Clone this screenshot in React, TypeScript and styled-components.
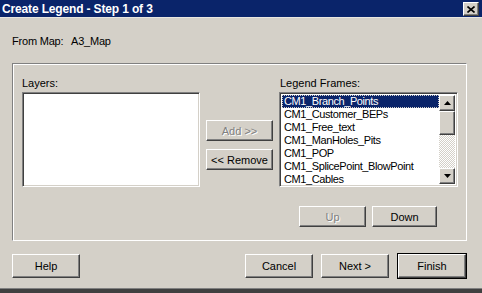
import React from "react";
import styled, { createGlobalStyle, css } from "styled-components";

const Global = createGlobalStyle`
  html, body { margin: 0; padding: 0; background: #d4d0c8; }
  body { font-family: "Liberation Sans", Arial, sans-serif; font-size: 11px; color: #000; }
  * { box-sizing: border-box; }
`;

const Window = styled.div`
  width: 482px;
  height: 293px;
  background: #d4d0c8;
  display: flex;
  flex-direction: column;
  overflow: hidden;
`;

const TitleBar = styled.div`
  height: 17px;
  flex: none;
  background: #0a246a;
  display: flex;
  align-items: center;
  justify-content: space-between;
  padding: 0 3px 0 2px;
`;

const Title = styled.span`
  color: #fff;
  font-weight: bold;
  font-size: 12px;
  letter-spacing: -0.15px;
`;

const CloseBtn = styled.div`
  width: 16px;
  height: 14px;
  margin-top: 2px;
  align-self: flex-start;
  background: #d4d0c8;
  border-top: 1px solid #fff;
  border-left: 1px solid #fff;
  border-right: 1px solid #404040;
  border-bottom: 1px solid #404040;
  box-shadow: inset -1px -1px 0 #808080;
  display: flex;
  align-items: center;
  justify-content: center;
`;

const Body = styled.div`
  flex: 1;
  display: flex;
  flex-direction: column;
  border-top: 1px solid #e8e6e0;
`;

const FromRow = styled.div`
  display: flex;
  height: 13px;
  line-height: 13px;
  font-size: 11px;
  letter-spacing: -0.2px;
  margin: 17px 0 15px 12px;
`;

const FromLabel = styled.div`
  flex: none;
  width: 59px;
`;

const Group = styled.div`
  margin-left: 12px;
  width: 455px;
  height: 178px;
  border: 1px solid #808080;
  border-right-color: #fff;
  border-bottom-color: #fff;
  box-shadow: inset 1px 1px 0 #fff, 1px 1px 0 #808080 inset;
  display: grid;
  grid-template-columns: 178px 67px 179px;
  column-gap: 6px;
  padding: 13px 0 0 9px;
  align-content: start;
`;

const Column = styled.div`
  display: flex;
  flex-direction: column;
`;

const Label = styled.div<{ $indent?: number }>`
  height: 13px;
  line-height: 13px;
  margin-bottom: 2px;
  padding-left: ${(p) => p.$indent ?? 0}px;
`;

const sunken = css`
  background: #fff;
  border-top: 1px solid #808080;
  border-left: 1px solid #808080;
  border-right: 1px solid #fff;
  border-bottom: 1px solid #fff;
  box-shadow: inset 1px 1px 0 #404040, inset -1px -1px 0 #d4d0c8;
`;

const ListBox = styled.div`
  ${sunken};
  height: 95px;
  width: 100%;
  padding: 2px;
  display: flex;
`;

const Items = styled.div`
  flex: 1;
  display: flex;
  flex-direction: column;
`;

const Item = styled.div<{ $sel?: boolean }>`
  height: 13px;
  line-height: 13px;
  padding-left: 2px;
  font-size: 11px;
  letter-spacing: -0.4px;
  white-space: nowrap;
  ${(p) =>
    p.$sel &&
    css`
      background: #0a246a;
      color: #fff;
      outline: 1px dotted #d4d0c8;
      outline-offset: -1px;
    `}
`;

const raised = css`
  background: #d4d0c8;
  border-top: 1px solid #fff;
  border-left: 1px solid #fff;
  border-right: 1px solid #404040;
  border-bottom: 1px solid #404040;
  box-shadow: inset -1px -1px 0 #808080;
`;

const ScrollBar = styled.div`
  width: 16px;
  display: flex;
  flex-direction: column;
`;

const ScrollBtn = styled.div`
  ${raised};
  height: 16px;
  flex: none;
  display: flex;
  align-items: center;
  justify-content: center;
`;

const Thumb = styled.div`
  ${raised};
  height: 24px;
  flex: none;
`;

const Track = styled.div`
  flex: 1;
  background-color: #fff;
  background-image: linear-gradient(45deg, #d4d0c8 25%, transparent 25%, transparent 75%, #d4d0c8 75%),
    linear-gradient(45deg, #d4d0c8 25%, transparent 25%, transparent 75%, #d4d0c8 75%);
  background-size: 2px 2px;
  background-position: 0 0, 1px 1px;
`;

const Button = styled.button<{ $w?: number; $h?: number; $default?: boolean }>`
  font-family: "Liberation Sans", Arial, sans-serif;
  font-size: 11px;
  color: #000;
  width: ${(p) => p.$w ?? 68}px;
  height: ${(p) => p.$h ?? 21}px;
  padding: 0;
  margin: 0;
  ${raised};
  ${(p) =>
    p.$default &&
    css`
      outline: 1px solid #000;
      outline-offset: 0;
    `}
  &:disabled {
    color: #808080;
    text-shadow: 1px 1px 0 #fff;
  }
`;

const MidColumn = styled.div`
  display: flex;
  flex-direction: column;
  gap: 8px;
  padding-top: 43px;
`;

const MoveRow = styled.div`
  grid-column: 3;
  display: flex;
  gap: 6px;
  padding-left: 20px;
  margin-top: 19px;
`;

const ButtonRow = styled.div`
  display: flex;
  margin: 13px 16px 0 12px;
  height: 24px;
`;

const Spacer = styled.div`
  flex: 1;
`;

const Gap = styled.div<{ $w: number }>`
  width: ${(p) => p.$w}px;
`;

const BottomEdge = styled.div`
  margin-top: auto;
  height: 5px;
  background: #404040;
  border-top: 1px solid #808080;
`;

const Arrow = ({ up }: { up?: boolean }) => (
  <svg width="7" height="4" viewBox="0 0 7 4">
    <path d={up ? "M3.5 0 L7 4 L0 4 Z" : "M0 0 L7 0 L3.5 4 Z"} fill="#000" />
  </svg>
);

const items = [
  "CM1_Branch_Points",
  "CM1_Customer_BEPs",
  "CM1_Free_text",
  "CM1_ManHoles_Pits",
  "CM1_POP",
  "CM1_SplicePoint_BlowPoint",
  "CM1_Cables",
];

export default function App() {
  return (
    <>
      <Global />
      <Window>
        <TitleBar>
          <Title>Create Legend - Step 1 of 3</Title>
          <CloseBtn>
            <svg width="8" height="7" viewBox="0 0 8 7">
              <path d="M0.5 0.5 L7.5 6.5 M7.5 0.5 L0.5 6.5" stroke="#000" strokeWidth="1.6" />
            </svg>
          </CloseBtn>
        </TitleBar>
        <Body>
          <FromRow>
            <FromLabel>From Map:</FromLabel>
            <div>A3_Map</div>
          </FromRow>
          <Group>
            <Column>
              <Label>Layers:</Label>
              <ListBox />
            </Column>
            <MidColumn>
              <Button $w={67} disabled>Add &gt;&gt;</Button>
              <Button $w={67}>&lt;&lt; Remove</Button>
            </MidColumn>
            <Column>
              <Label $indent={1}>Legend Frames:</Label>
              <ListBox>
                <Items>
                  {items.map((it, i) => (
                    <Item key={it} $sel={i === 0}>{it}</Item>
                  ))}
                </Items>
                <ScrollBar>
                  <ScrollBtn><Arrow up /></ScrollBtn>
                  <Thumb />
                  <Track />
                  <ScrollBtn><Arrow /></ScrollBtn>
                </ScrollBar>
              </ListBox>
            </Column>
            <MoveRow>
              <Button $w={67} disabled>Up</Button>
              <Button $w={65}>Down</Button>
            </MoveRow>
          </Group>
          <ButtonRow>
            <Button $h={24}>Help</Button>
            <Spacer />
            <Button $h={24}>Cancel</Button>
            <Gap $w={8} />
            <Button $h={24}>Next &gt;</Button>
            <Gap $w={9} />
            <Button $h={24} $default>Finish</Button>
          </ButtonRow>
          <BottomEdge />
        </Body>
      </Window>
    </>
  );
}
